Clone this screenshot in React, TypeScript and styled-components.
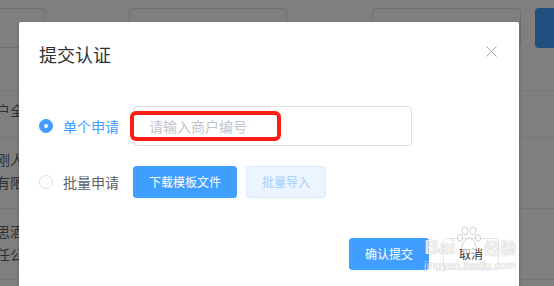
import React from "react";
import styled, { createGlobalStyle } from "styled-components";

const Global = createGlobalStyle`
  html, body { margin: 0; padding: 0; }
  body {
    width: 554px;
    height: 286px;
    overflow: hidden;
    background: #ffffff;
    font-family: "Noto Sans CJK SC", "Noto Sans", "Liberation Sans", sans-serif;
  }
  * { box-sizing: border-box; }
`;

const Page = styled.div`
  position: relative;
  width: 554px;
  height: 286px;
  overflow: hidden;
  background: #ffffff;
`;

const FilterBar = styled.div`
  display: flex;
  align-items: center;
  padding-top: 8px;
  height: 48px;
`;

const FilterInput = styled.div<{ $w: number; $cut?: boolean }>`
  flex: none;
  width: ${(p) => p.$w}px;
  height: 40px;
  border: 1px solid #dcdfe6;
  border-left: ${(p) => (p.$cut ? "none" : "1px solid #dcdfe6")};
  border-radius: ${(p) => (p.$cut ? "0 4px 4px 0" : "4px")};
  background: #fff;
`;

const FilterLabel = styled.div<{ $w: number }>`
  flex: none;
  width: ${(p) => p.$w}px;
  text-align: center;
  font-size: 14px;
  line-height: 40px;
  color: #606266;
`;

const SearchButton = styled.div`
  flex: none;
  margin-left: 14px;
  width: 70px;
  height: 40px;
  border-radius: 4px;
  background: #409eff;
`;

const Table = styled.div`
  margin-top: 42px;
  border-top: 1px solid #ebeef5;
`;

const Row = styled.div<{ $top: number; $bottom: number }>`
  display: flex;
  border-bottom: 1px solid #ebeef5;
  padding: ${(p) => p.$top}px 0 ${(p) => p.$bottom}px;
`;

const Cell = styled.div`
  width: 120px;
  margin-left: -4px;
  font-size: 14px;
  line-height: 23px;
  color: #606266;
  white-space: nowrap;
`;

const Mask = styled.div`
  position: absolute;
  inset: 0;
  background: rgba(0, 0, 0, 0.5);
`;

const Dialog = styled.div`
  position: absolute;
  left: 19px;
  top: 22px;
  width: 500px;
  background: #ffffff;
  border-radius: 2px;
  box-shadow: 0 1px 3px rgba(0, 0, 0, 0.3);
`;

const Header = styled.div`
  display: flex;
  justify-content: space-between;
  align-items: center;
  padding: 20px 20px 10px;
`;

const Title = styled.div`
  font-size: 18px;
  line-height: 24px;
  color: #303133;
`;

const CloseButton = styled.div`
  width: 16px;
  height: 16px;
  display: flex;
  align-items: center;
  justify-content: center;
  margin-top: -6px;
`;

const Body = styled.div`
  display: flex;
  flex-direction: column;
  gap: 20px;
  padding: 30px 20px;
`;

const FormRow = styled.div`
  display: flex;
  align-items: center;
`;

const RadioLabel = styled.div<{ $active?: boolean }>`
  flex: none;
  width: 94px;
  display: flex;
  align-items: center;
  gap: 10px;
  font-size: 14px;
  line-height: 1;
  color: ${(p) => (p.$active ? "#409eff" : "#606266")};
`;

const RadioDot = styled.span<{ $checked?: boolean }>`
  flex: none;
  width: 14px;
  height: 14px;
  border-radius: 50%;
  border: 1px solid ${(p) => (p.$checked ? "#409eff" : "#dcdfe6")};
  background: ${(p) => (p.$checked ? "#409eff" : "#fff")};
  display: flex;
  align-items: center;
  justify-content: center;
  &::after {
    content: "";
    width: 4px;
    height: 4px;
    border-radius: 50%;
    background: #fff;
    display: ${(p) => (p.$checked ? "block" : "none")};
  }
`;

const InputWrap = styled.div`
  position: relative;
  width: 279px;
  height: 40px;
`;

const Input = styled.div`
  width: 100%;
  height: 100%;
  border: 1px solid #dcdfe6;
  border-radius: 4px;
  padding: 0 15px;
  font-size: 14px;
  line-height: 38px;
  color: #c0c4cc;
`;

const Highlight = styled.div`
  position: absolute;
  left: -3px;
  top: 5px;
  width: 151px;
  height: 30px;
  border: 4px solid #ff1c14;
  border-radius: 6px;
  pointer-events: none;
`;

const Buttons = styled.div`
  display: flex;
  gap: 9px;
`;

const Button = styled.div<{ $variant: "primary" | "disabled" | "default" }>`
  height: 32px;
  padding: 0 15px;
  border-radius: 3px;
  font-size: 12px;
  line-height: 30px;
  white-space: nowrap;
  border: 1px solid
    ${(p) =>
      p.$variant === "primary" ? "#409eff" : p.$variant === "disabled" ? "#d9ecff" : "#e4e7ed"};
  background: ${(p) =>
    p.$variant === "primary" ? "#409eff" : p.$variant === "disabled" ? "#ecf5ff" : "#ffffff"};
  color: ${(p) =>
    p.$variant === "primary" ? "#ffffff" : p.$variant === "disabled" ? "#a0cfff" : "#303133"};
`;

const Footer = styled.div`
  display: flex;
  justify-content: flex-end;
  gap: 14px;
  padding: 10px 20px 20px;
`;

const Watermark = styled.div`
  position: absolute;
  left: 424px;
  top: 226px;
  display: flex;
  flex-direction: column;
  align-items: flex-start;
  color: rgba(255, 255, 255, 0.85);
  text-shadow: 0 0 1px rgba(0, 0, 0, 0.35);
  pointer-events: none;
`;

const MarkTop = styled.div`
  display: flex;
  align-items: flex-end;
`;

const MarkBai = styled.span`
  font-family: "Liberation Sans", sans-serif;
  font-weight: bold;
  font-size: 21px;
  line-height: 22px;
  letter-spacing: -0.5px;
`;

const MarkJy = styled.span`
  font-family: "Noto Sans CJK SC", sans-serif;
  font-weight: bold;
  font-size: 16px;
  line-height: 22px;
  margin-left: 2px;
`;

const MarkUrl = styled.span`
  font-family: "Liberation Sans", sans-serif;
  font-size: 11px;
  line-height: 12px;
  margin-top: 1px;
  letter-spacing: 0.2px;
`;

const Paw = () => (
  <svg width="26" height="32" viewBox="0 0 26 32" style={{ marginLeft: 1 }}>
    <g fill="rgba(255,255,255,0.6)" stroke="rgba(0,0,0,0.18)" strokeWidth="1">
      <ellipse cx="9" cy="5" rx="3" ry="4" />
      <ellipse cx="17" cy="5" rx="3" ry="4" />
      <ellipse cx="4" cy="12" rx="2.6" ry="3.4" />
      <ellipse cx="22" cy="12" rx="2.6" ry="3.4" />
      <path d="M13 12 C8 12 5 20 6 25 C7 29 11 27 13 27 C15 27 19 29 20 25 C21 20 18 12 13 12 Z" />
    </g>
  </svg>
);

const CloseIcon = () => (
  <svg width="11" height="11" viewBox="0 0 11 11">
    <path d="M0.5 0.5 L10.5 10.5 M10.5 0.5 L0.5 10.5" stroke="#a0a3a8" strokeWidth="1" />
  </svg>
);

export default function App() {
  return (
    <Page>
      <Global />
      <FilterBar>
        <FilterInput $w={45} $cut />
        <FilterLabel $w={84}>商户名称</FilterLabel>
        <FilterInput $w={158} />
        <FilterLabel $w={85}>认证状态</FilterLabel>
        <FilterInput $w={149} />
        <SearchButton />
      </FilterBar>
      <Table>
        <Row $top={8} $bottom={15}>
          <Cell>户全称</Cell>
        </Row>
        <Row $top={10} $bottom={14}>
          <Cell>
            刚人力资源
            <br />
            有限公司
          </Cell>
        </Row>
        <Row $top={11} $bottom={13}>
          <Cell>
            思酒业有限责
            <br />
            任公司
          </Cell>
        </Row>
      </Table>
      <Mask />
      <Dialog>
        <Header>
          <Title>提交认证</Title>
          <CloseButton>
            <CloseIcon />
          </CloseButton>
        </Header>
        <Body>
          <FormRow>
            <RadioLabel $active>
              <RadioDot $checked />
              单个申请
            </RadioLabel>
            <InputWrap>
              <Input>请输入商户编号</Input>
              <Highlight />
            </InputWrap>
          </FormRow>
          <FormRow>
            <RadioLabel>
              <RadioDot />
              批量申请
            </RadioLabel>
            <Buttons>
              <Button $variant="primary">下载模板文件</Button>
              <Button $variant="disabled">批量导入</Button>
            </Buttons>
          </FormRow>
        </Body>
        <Footer>
          <Button $variant="primary">确认提交</Button>
          <Button $variant="default">取消</Button>
        </Footer>
      </Dialog>
      <Watermark>
        <MarkTop>
          <MarkBai>Bai</MarkBai>
          <Paw />
          <MarkJy>经验</MarkJy>
        </MarkTop>
        <MarkUrl>jingyan.baidu.com</MarkUrl>
      </Watermark>
    </Page>
  );
}
